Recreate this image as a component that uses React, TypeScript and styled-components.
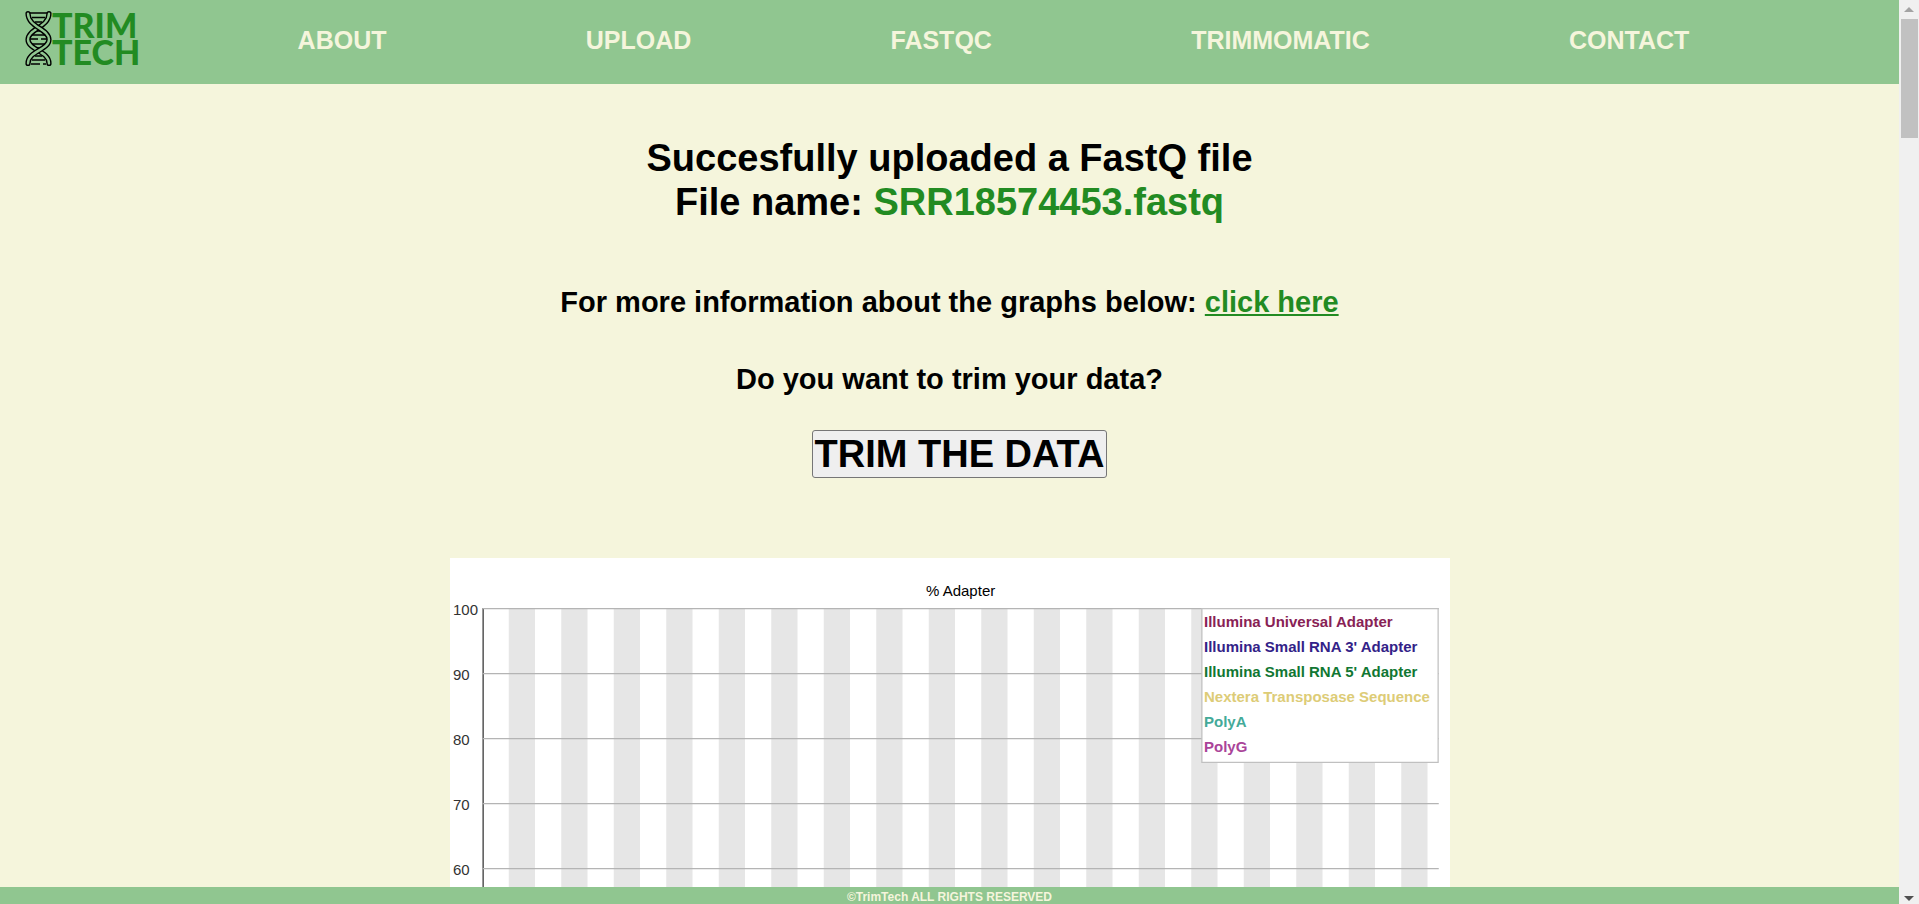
import React from "react";
import styled, { createGlobalStyle } from "styled-components";

const GlobalStyle = createGlobalStyle`
  * { box-sizing: border-box; }
  body {
    margin: 0;
    background: #f5f5dc;
    color: #000;
    font-family: Arial, "Liberation Sans", sans-serif;
  }
`;

const Shell = styled.div`
  display: flex;
  height: 100vh;
  overflow: hidden;
`;

const Page = styled.div`
  display: flex;
  flex: 1;
  flex-direction: column;
  min-width: 0;
`;

const Header = styled.header`
  display: flex;
  flex: none;
  align-items: flex-start;
  height: 84px;
  padding-right: 110px;
  background: #90c690;
`;

const Logo = styled.a`
  display: flex;
  flex: none;
  align-items: flex-start;
  width: 198px;
  padding: 11px 0 0 25px;
  color: #228b22;
  text-decoration: none;
`;

const Wordmark = styled.span`
  display: flex;
  flex-direction: column;
  font-family: Lato, sans-serif;
  font-size: 34px;
  font-weight: 900;
  line-height: 27px;
`;

const Nav = styled.nav`
  display: flex;
  flex: 1;
  justify-content: space-around;
  padding-top: 26px;
`;

const NavLink = styled.a`
  color: #f5f5dc;
  font-size: 25px;
  font-weight: bold;
  line-height: 28px;
  text-decoration: none;
`;

const Main = styled.main`
  display: flex;
  flex: 1;
  flex-direction: column;
  align-items: center;
  min-height: 0;
  padding-top: 52px;
  overflow: hidden;
  text-align: center;
`;

const Title = styled.h1`
  margin: 0;
  font-size: 38px;
  line-height: 44px;
`;

const FileName = styled.span`
  color: #228b22;
`;

const Prompt = styled.h2<{ $gap: number }>`
  margin: ${(p) => p.$gap}px 0 0;
  font-size: 29px;
  line-height: 33px;
`;

const InfoLink = styled.a`
  color: #228b22;
`;

const TrimButton = styled.button`
  flex: none;
  height: 48px;
  margin: 34px 0 0 20px;
  padding: 0 2px;
  border: 1px solid #767676;
  border-radius: 3px;
  background: #efefef;
  color: #000;
  font-family: inherit;
  font-size: 38px;
  font-weight: bold;
  line-height: 44px;
`;

const Chart = styled.svg`
  flex: none;
  width: 1000px;
  max-width: 100%;
  margin-top: 80px;
  background: #fff;
  font-family: Arial, "Liberation Sans", sans-serif;
  font-size: 15px;
`;

const Footer = styled.footer`
  flex: none;
  height: 17px;
  padding-top: 3px;
  background: #90c690;
  color: #f5f5dc;
  font-size: 12px;
  font-weight: bold;
  line-height: 14px;
  text-align: center;
`;

const ScrollTrack = styled.div`
  display: flex;
  flex: none;
  flex-direction: column;
  justify-content: space-between;
  align-items: center;
  width: 20px;
  padding: 7px 0 3px;
  background: #f0f0f0;
`;

const ScrollThumb = styled.div`
  width: 17px;
  height: 119px;
  margin: 7px 0 auto;
  background: #c1c1c1;
`;

const links = ["ABOUT", "UPLOAD", "FASTQC", "TRIMMOMATIC", "CONTACT"];

const adapters = [
  { name: "Illumina Universal Adapter", color: "#882255" },
  { name: "Illumina Small RNA 3' Adapter", color: "#332288" },
  { name: "Illumina Small RNA 5' Adapter", color: "#117733" },
  { name: "Nextera Transposase Sequence", color: "#ddcc77" },
  { name: "PolyA", color: "#44aa99" },
  { name: "PolyG", color: "#aa4499" },
];

const ticks = [100, 90, 80, 70, 60];

const strands = [
  "M24 2.6C24 16 3 18 3 28.5S24 40 24 52.4",
  "M3 2.6C3 16 24 18 24 28.5S3 40 3 52.4",
];

function Helix() {
  return (
    <svg width="27" height="55" viewBox="0 0 27 55" fill="none" aria-hidden="true">
      <path
        d="M5 2H22M7 6.5H20M10 11H17M9 20H18M6 24H21M5 28H13M16 28H22M6 33H21M9 37H18M10 45H17M7 49H20M6 53H15M18 53H21"
        stroke="#000"
        strokeWidth="1.3"
      />
      {strands.map((d) => (
        <g key={d} strokeLinecap="round">
          <path d={d} stroke="#000" strokeWidth="5.2" />
          <path d={d} stroke="#90c690" strokeWidth="2.4" />
        </g>
      ))}
    </svg>
  );
}

function AdapterChart() {
  return (
    <Chart viewBox="0 0 1000 750" role="img" aria-label="% Adapter">
      <g transform="scale(1.25)">
        {Array.from({ length: 18 }, (_, i) => (
          <rect key={i} x={47 + i * 42} y={40} width={21} height={520} fill="#e6e6e6" />
        ))}
        <rect x={26} y={40} width={1} height={520} fill="#333" />
        {ticks.map((t, i) => (
          <rect key={t} x={26} y={40 + i * 52} width={765} height={1} fill="#b4b4b4" />
        ))}
        <rect x={601.5} y={40.5} width={189} height={123} fill="#fff" stroke="#c0c0c0" />
      </g>
      <text x={476} y={38}>% Adapter</text>
      {ticks.map((t, i) => (
        <text key={t} x={3} y={57 + i * 65} fill="#333">{t}</text>
      ))}
      {adapters.map((a, i) => (
        <text key={a.name} x={754} y={69 + i * 25} fill={a.color} fontWeight="bold">
          {a.name}
        </text>
      ))}
    </Chart>
  );
}

export default function App() {
  return (
    <>
      <GlobalStyle />
      <Shell>
        <Page>
          <Header>
            <Logo href="#">
              <Helix />
              <Wordmark>
                <span>TRIM</span>
                <span>TECH</span>
              </Wordmark>
            </Logo>
            <Nav>
              {links.map((l) => (
                <NavLink key={l} href={`#${l.toLowerCase()}`}>{l}</NavLink>
              ))}
            </Nav>
          </Header>
          <Main>
            <Title>
              Succesfully uploaded a FastQ file
              <br />
              File name: <FileName>SRR18574453.fastq</FileName>
            </Title>
            <Prompt $gap={62}>
              For more information about the graphs below: <InfoLink href="#graphs">click here</InfoLink>
            </Prompt>
            <Prompt $gap={44}>Do you want to trim your data?</Prompt>
            <TrimButton type="button">TRIM THE DATA</TrimButton>
            <AdapterChart />
          </Main>
          <Footer>©TrimTech ALL RIGHTS RESERVED</Footer>
        </Page>
        <ScrollTrack aria-hidden="true">
          <svg width="10" height="5" viewBox="0 0 10 5"><path d="M5 0L10 5H0Z" fill="#a3a3a3" /></svg>
          <ScrollThumb />
          <svg width="10" height="5" viewBox="0 0 10 5"><path d="M0 0H10L5 5Z" fill="#505050" /></svg>
        </ScrollTrack>
      </Shell>
    </>
  );
}
